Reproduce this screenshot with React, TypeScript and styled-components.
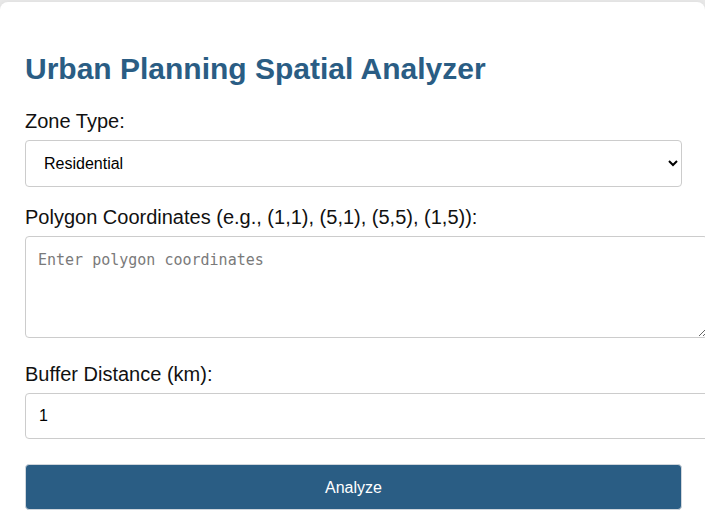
import React from "react";
import styled, { createGlobalStyle } from "styled-components";

const GlobalStyle = createGlobalStyle`
  html, body {
    margin: 0;
    padding: 0;
    background: #e9e9e9;
    font-family: "Liberation Sans", Arial, sans-serif;
  }
`;

const Card = styled.div`
  margin-top: 2px;
  width: 705px;
  box-sizing: border-box;
  min-height: 520px;
  background: #ffffff;
  border-radius: 8px;
  padding: 50px 23px 20px 25px;
  box-shadow: 0 0 6px rgba(0, 0, 0, 0.06);
`;

const Title = styled.h1`
  margin: 0 0 24px 0;
  font-size: 30px;
  line-height: 34px;
  font-weight: 700;
  color: #2a5d84;
`;

const Label = styled.label`
  display: block;
  font-size: 20px;
  line-height: 23px;
  color: #111;
  margin-bottom: 7px;
`;

const fieldBase = `
  display: block;
  font-family: "Liberation Sans", Arial, sans-serif;
  border: 1px solid #cccccc;
  border-radius: 4px;
  background: #ffffff;
  color: #000;
  outline: none;
`;

const Select = styled.select<{ $gap: number }>`
  ${fieldBase}
  width: 100%;
  box-sizing: border-box;
  height: 47px;
  padding: 0 10px 0 14px;
  font-size: 16px;
  margin-bottom: ${(p) => p.$gap}px;
`;

const TextArea = styled.textarea<{ $gap: number }>`
  ${fieldBase}
  width: 100%;
  box-sizing: content-box;
  height: 76px;
  padding: 14px 12px 10px 12px;
  font-family: "DejaVu Sans Mono", "Liberation Mono", monospace;
  font-size: 15px;
  margin-bottom: ${(p) => p.$gap}px;
  resize: vertical;
  &::placeholder {
    color: #7a7a7a;
  }
`;

const Input = styled.input<{ $gap: number }>`
  ${fieldBase}
  width: 100%;
  box-sizing: content-box;
  height: 20px;
  padding: 12px 12px 12px 13px;
  font-size: 16px;
  margin-bottom: ${(p) => p.$gap}px;
`;

const Button = styled.button`
  display: block;
  width: 100%;
  box-sizing: border-box;
  height: 46px;
  padding-top: 2px;
  background: #2a5d84;
  color: #ffffff;
  border: 1px solid #d0d6dc;
  border-radius: 4px;
  font-family: "Liberation Sans", Arial, sans-serif;
  font-size: 16px;
  cursor: pointer;
`;

export default function App() {
  return (
    <>
      <GlobalStyle />
      <Card>
        <Title>Urban Planning Spatial Analyzer</Title>
        <Label htmlFor="zone">Zone Type:</Label>
        <Select id="zone" $gap={19} defaultValue="residential">
          <option value="residential">Residential</option>
          <option value="commercial">Commercial</option>
          <option value="industrial">Industrial</option>
        </Select>
        <Label htmlFor="coords">
          Polygon Coordinates (e.g., (1,1), (5,1), (5,5), (1,5)):
        </Label>
        <TextArea id="coords" $gap={25} placeholder="Enter polygon coordinates" />
        <Label htmlFor="buffer">Buffer Distance (km):</Label>
        <Input id="buffer" type="text" defaultValue="1" $gap={25} />
        <Button>Analyze</Button>
      </Card>
    </>
  );
}
